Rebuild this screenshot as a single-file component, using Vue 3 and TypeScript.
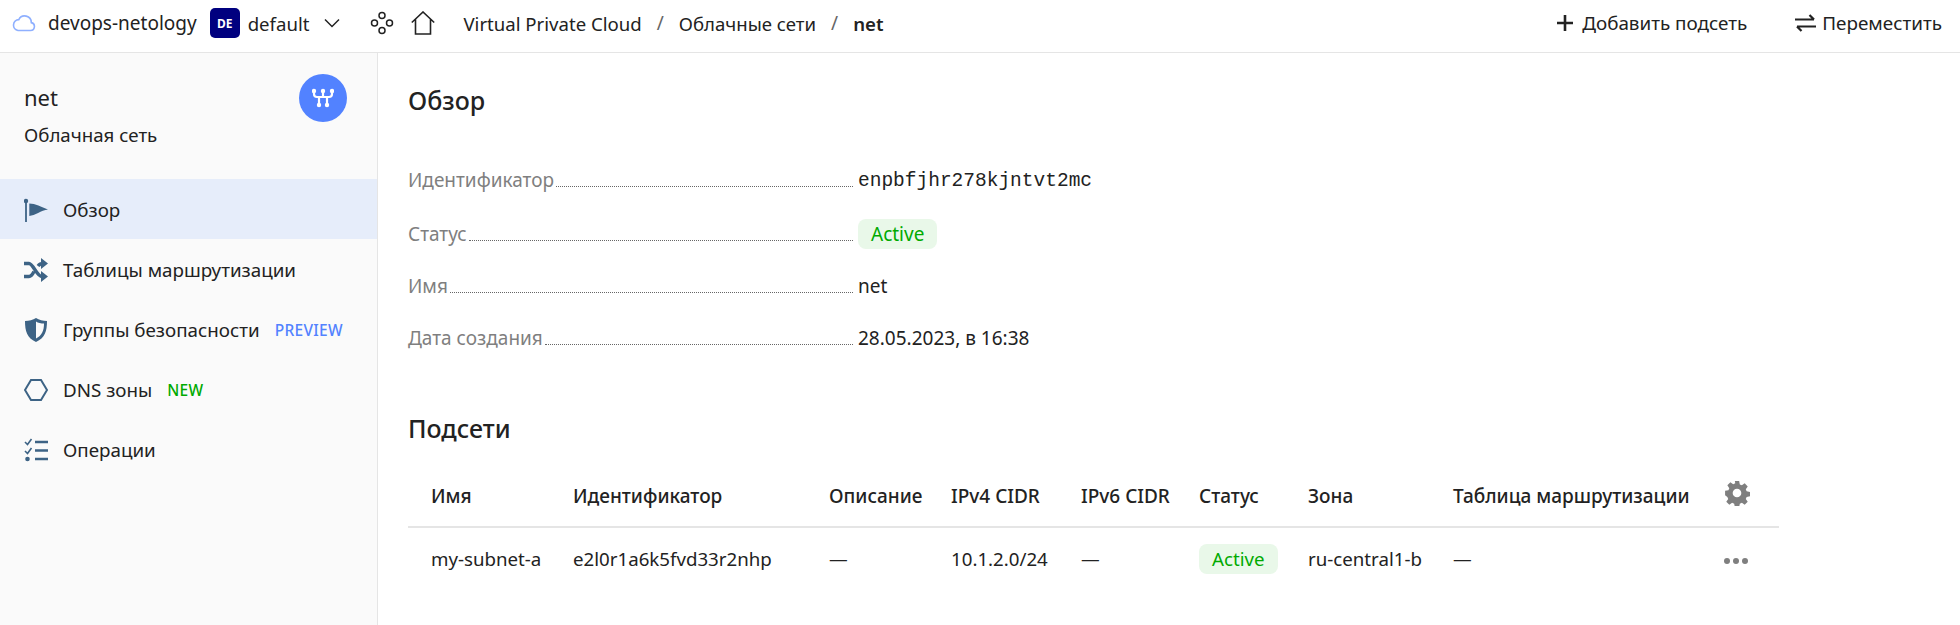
<template>
<div class="page">
    <header class="topbar">
        <div class="crumbs">
            <svg class="cloud" width="24" height="18" viewBox="0 0 24 18" fill="none" stroke="#8fb0ff" stroke-width="1.6">
                <path d="M6 16.5h12.5a4 4 0 0 0 .8-7.9 6.6 6.6 0 0 0-12.5-3A5.5 5.5 0 0 0 6 16.5z" />
            </svg>
            <span class="folder">devops-netology</span>
            <span class="avatar">DE</span>
            <span class="cat">default</span>
            <svg class="chev" width="16" height="10" viewBox="0 0 16 10" fill="none" stroke="#222" stroke-width="1.5">
                <path d="M1 1.5l7 7 7-7" />
            </svg>
            <svg class="services" width="24" height="24" viewBox="0 0 24 24" fill="none" stroke="#222" stroke-width="1.5">
                <circle cx="12" cy="4.5" r="3" />
                <circle cx="4.5" cy="12" r="3" />
                <circle cx="19.5" cy="12" r="3" />
                <circle cx="12" cy="19.5" r="3" />
            </svg>
            <svg class="home" width="24" height="24" viewBox="0 0 24 24" fill="none" stroke="#222" stroke-width="1.6">
                <path d="M.8 11.500L12 1l11.200 10.500M4.500 8.500V23h15V8.500" />
            </svg>
            <span class="crumb">Virtual Private Cloud</span>
            <span class="slash">/</span>
            <span class="crumb">Облачные сети</span>
            <span class="slash">/</span>
            <b class="crumb">net</b>
        </div>
        <div class="actions">
            <span class="action">
                <svg width="16" height="16" viewBox="0 0 16 16" fill="none" stroke="#222" stroke-width="2.6"><path d="M8 0v16M0 8h16" /></svg>
                Добавить подсеть
            </span>
            <span class="action swap">
                <svg width="21" height="18" viewBox="0 0 21 18" fill="none" stroke="#222" stroke-width="2.2"><path d="M0 5.500h19M14.500 1l4.500 4.500M21 12.500H2M6.500 17L2 12.500" /></svg>
                Переместить
            </span>
        </div>
    </header>
    <div class="body">
        <aside class="side">
            <div class="side-head">
                <div>
                    <div class="side-title">net</div>
                    <div class="side-sub">Облачная сеть</div>
                </div>
                <span class="round">
                    <svg width="22" height="20" viewBox="0 0 22 20" fill="none" stroke="#fff" stroke-width="2.2">
                        <path d="M2 3v3q0 3 3 3h12q3 0 3-3V3M11 3v6M7 9v8M15 9v8" />
                        <g fill="#fff" stroke="none">
                            <circle cx="2" cy="3" r="2.200" /><circle cx="11" cy="3" r="2.200" /><circle cx="20" cy="3" r="2.200" />
                            <circle cx="7" cy="17" r="2.200" /><circle cx="15" cy="17" r="2.200" />
                        </g>
                    </svg>
                </span>
            </div>
            <nav class="nav">
                <div v-for="n in nav" :key="n.title" class="nav-item" :class="{ active: n.active }">
                    <svg class="nav-icon" width="24" height="24" viewBox="0 0 24 24" fill="none" stroke="#3d6385" stroke-width="2">
                        <template v-if="n.icon === 'flag'">
                            <path d="M2 3v21" stroke-width="1.8" />
                            <circle cx="2" cy="3" r="2.200" fill="#3d6385" stroke="none" />
                            <path d="M5.300 5.500c6 0 12 3.500 18.700 6-7 1-13 6-18.700 6.500z" fill="#3d6385" stroke="none" />
                        </template>
                        <template v-else-if="n.icon === 'shuffle'">
                            <path d="M0 5.500h5c4 0 8 13 13 13h2M0 18.500h5c2 0 3.500-2 5-5M14 8c1.500-2 3-2.500 5-2.500h2" stroke-width="3.400" />
                            <path d="M17 0l7 5.500-7 5.500zM17 13l7 5.500-7 5.500z" fill="#3d6385" stroke="none" />
                        </template>
                        <template v-else-if="n.icon === 'shield'">
                            <path d="M12 0C9 2 5 3 1 3c0 10 2 17 11 21 9-4 11-11 11-21-4 0-8-1-11-3zm0 3.500v17c6-3 8-8 8-15-3 0-6-.500-8-2z" fill="#3d6385" stroke="none" fill-rule="evenodd" />
                        </template>
                        <template v-else-if="n.icon === 'hex'">
                            <path d="M7 2h10l6 10-6 10H7L1 12z" />
                        </template>
                        <template v-else>
                            <path d="M1 4l2.500 2.500L7.500 1M1 13l2.500 2.500L7.500 10" stroke-width="1.6" />
                            <circle cx="3.500" cy="21" r="2.300" fill="#3d6385" stroke="none" />
                            <path d="M11 4h13M11 12.500h13M11 21h13" stroke-width="2.400" />
                        </template>
                    </svg>
                    <span>{{ n.title }}</span>
                    <span v-if="n.tag" class="tag" :class="n.tagClass">{{ n.tag }}</span>
                </div>
            </nav>
        </aside>
        <main class="main">
            <h2 class="h-over">Обзор</h2>
            <div class="props">
                <div v-for="p in props" :key="p.label" class="prop">
                    <div class="prop-key">
                        <span class="prop-label">{{ p.label }}</span>
                        <span class="prop-dots"></span>
                    </div>
                    <span v-if="p.status" class="status">{{ p.value }}</span>
                    <span v-else class="prop-value" :class="{ mono: p.mono }">{{ p.value }}</span>
                </div>
            </div>
            <h2 class="h-sub">Подсети</h2>
            <table class="tbl">
                <thead>
                    <tr>
                        <th v-for="c in cols" :key="c.title" :style="{ width: c.width + 'px' }">{{ c.title }}</th>
                        <th class="col-last">
                            <svg width="26" height="26" viewBox="0 0 24 24" fill="#7f7f7f" fill-rule="evenodd">
                                <path d="M10 1h4l.6 3.100 1.900.8 2.600-1.800 2.800 2.800-1.800 2.600.8 1.900 3.100.6v4l-3.100.6-.8 1.900 1.800 2.600-2.800 2.800-2.600-1.800-1.900.8-.6 3.100h-4l-.6-3.100-1.900-.8-2.600 1.800-2.800-2.800 1.800-2.600-.8-1.900L1 14v-4l3.100-.6.8-1.900-1.800-2.600 2.800-2.800 2.600 1.800 1.900-.8zM12 8a4 4 0 1 0 0 8 4 4 0 0 0 0-8z" />
                            </svg>
                        </th>
                    </tr>
                </thead>
                <tbody>
                    <tr>
                        <td>my-subnet-a</td>
                        <td>e2l0r1a6k5fvd33r2nhp</td>
                        <td>—</td>
                        <td>10.1.2.0/24</td>
                        <td>—</td>
                        <td><span class="status">Active</span></td>
                        <td>ru-central1-b</td>
                        <td>—</td>
                        <td class="col-last"><span class="dots"><i></i><i></i><i></i></span></td>
                    </tr>
                </tbody>
            </table>
        </main>
    </div>
</div>
</template>

<script setup lang="ts">
const nav = [
    { title: 'Обзор', icon: 'flag', active: true },
    { title: 'Таблицы маршрутизации', icon: 'shuffle' },
    { title: 'Группы безопасности', icon: 'shield', tag: 'PREVIEW', tagClass: 'blue' },
    { title: 'DNS зоны', icon: 'hex', tag: 'NEW', tagClass: 'green' },
    { title: 'Операции', icon: 'list' },
]
const props = [
    { label: 'Идентификатор', value: 'enpbfjhr278kjntvt2mc', mono: true },
    { label: 'Статус', value: 'Active', status: true },
    { label: 'Имя', value: 'net' },
    { label: 'Дата создания', value: '28.05.2023, в 16:38' },
]
const cols = [
    { title: 'Имя', width: 142 },
    { title: 'Идентификатор', width: 256 },
    { title: 'Описание', width: 122 },
    { title: 'IPv4 CIDR', width: 130 },
    { title: 'IPv6 CIDR', width: 118 },
    { title: 'Статус', width: 109 },
    { title: 'Зона', width: 145 },
    { title: 'Таблица маршрутизации', width: 271 },
]
</script>

<style>
html, body {
    margin: 0;
    background: #fff;
}
</style>

<style scoped>
.page {
    height: 625px;
    overflow: hidden;
    font-family: "Noto Sans", "Liberation Sans", sans-serif;
    font-size: 19px;
    color: #222;
}
.topbar {
    height: 46px;
    border-bottom: 1px solid #e5e5e5;
    display: flex;
    align-items: center;
    justify-content: space-between;
    padding: 0 18px 6px 12px;
}
.crumbs, .actions, .action {
    display: flex;
    align-items: center;
}
.folder {
    margin-left: 12px;
}
.avatar {
    width: 30px;
    height: 30px;
    margin-left: 13px;
    border-radius: 5px;
    background: #00007f;
    color: #fff;
    font-size: 12px;
    font-weight: 700;
    display: flex;
    align-items: center;
    justify-content: center;
}
.cat {
    margin-left: 8px;
    font-size: 18.6px;
}
.chev {
    margin-left: 15px;
}
.services {
    margin-left: 30px;
}
.home {
    margin-left: 17px;
}
.home + .crumb {
    margin-left: 28px;
}
.slash {
    margin: 0 15px;
    color: #666;
}
.crumb {
    font-size: 18.6px;
    font-weight: 400;
}
b.crumb {
    font-weight: 600;
}
.action {
    margin-left: 48px;
    gap: 9px;
    font-size: 18.85px;
}
.action.swap {
    gap: 6px;
}
.body {
    display: flex;
    height: 572px;
}
.side {
    width: 378px;
    flex: none;
    box-sizing: border-box;
    background: #fafafa;
    border-right: 1px solid #e5e5e5;
}
.side-head {
    height: 126px;
    padding: 21px 30px 0 24px;
    box-sizing: border-box;
    display: flex;
    justify-content: space-between;
}
.side-title {
    font-size: 22px;
    line-height: 28px;
    margin-top: 9px;
}
.side-sub {
    margin-top: 12px;
    line-height: 24px;
    font-size: 18.7px;
}
.round {
    width: 48px;
    height: 48px;
    border-radius: 50%;
    background: #5282ff;
    display: flex;
    align-items: center;
    justify-content: center;
}
.nav-item {
    height: 60px;
    box-sizing: border-box;
    padding: 2px 0 0 24px;
    display: flex;
    align-items: center;
    font-size: 18.8px;
}
.nav-item.active {
    background: #e6edfa;
}
.nav-icon {
    margin-right: 15px;
    flex: none;
}
.tag {
    font-size: 15.5px;
    font-weight: 500;
    margin-left: 15px;
    letter-spacing: .3px;
}
.tag.blue {
    color: #5282ff;
}
.tag.green {
    color: #00aa00;
}
.main {
    flex: 1;
    padding-left: 30px;
}
h2 {
    margin: 0;
    font-size: 25px;
    font-weight: 500;
    color: #222;
}
.h-over {
    line-height: 32px;
    margin-top: 31px;
}
.props {
    margin-top: 36px;
}
.prop {
    height: 52px;
    display: flex;
    align-items: center;
}
.prop:first-child {
    height: 56px;
}
.prop-key {
    width: 445px;
    flex: none;
    margin-right: 5px;
    display: flex;
    align-items: center;
}
.prop-label {
    color: #7f7f7f;
}
.prop-dots {
    flex: 1;
    height: 0;
    margin: 13px 0 0 2px;
    border-bottom: 1px dotted #666;
}
.prop-value.mono {
    font-family: "Liberation Mono", monospace;
    font-size: 19.5px;
    margin-top: 2px;
}
.status {
    display: inline-block;
    padding: 0 13px;
    height: 30px;
    line-height: 30px;
    border-radius: 8px;
    background: #e9f8e9;
    color: #00aa00;
}
.h-sub {
    line-height: 32px;
    margin-top: 48px;
}
.tbl {
    margin-top: 28px;
    border-collapse: collapse;
    table-layout: fixed;
}
.tbl th, .tbl td {
    text-align: left;
    padding: 0 0 0 23px;
    box-sizing: border-box;
}
.tbl th {
    height: 55px;
    padding-bottom: 7px;
    font-weight: 500;
    border-bottom: 2px solid #e5e5e5;
}
.tbl td {
    height: 62px;
    font-size: 18.7px;
}
.tbl .col-last {
    width: 78px;
}
.dots {
    display: inline-flex;
    gap: 3px;
    vertical-align: middle;
}
.dots i {
    width: 6px;
    height: 6px;
    border-radius: 50%;
    background: #7f7f7f;
}
</style>
